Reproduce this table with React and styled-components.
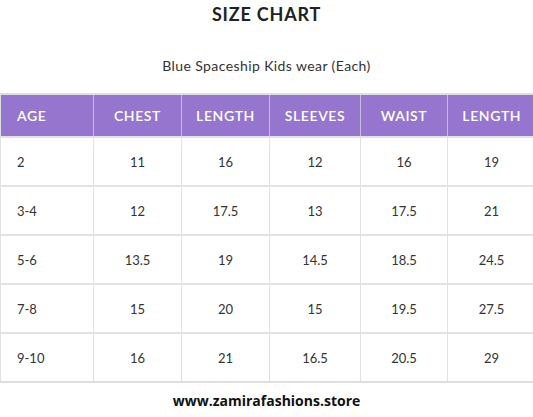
import React from "react";
import styled, { createGlobalStyle } from "styled-components";

const GlobalStyle = createGlobalStyle`
    html, body {
        margin: 0;
        padding: 0;
        background: #fff;
        overflow: hidden;
    }
`;

const Page = styled.div`
    width: 533px;
    height: 417px;
    overflow: hidden;
    font-family: "Lato", "Liberation Sans", sans-serif;
    color: #333;
`;

const Title = styled.h2`
    margin: 0;
    height: 28px;
    line-height: 28px;
    text-align: center;
    font-size: 18px;
    font-weight: 700;
    letter-spacing: 0.8px;
    color: #222;
`;

const Subtitle = styled.p`
    margin: 28px 0 0;
    line-height: 20px;
    text-align: center;
    font-size: 14px;
    letter-spacing: 0.4px;
    color: #333;
`;

const Table = styled.table`
    margin-top: 17px;
    width: 535px;
    border-collapse: collapse;
    table-layout: fixed;
    border-top: 2px solid #dedede;
    border-bottom: 2px solid #dedede;
`;

const HeadCell = styled.th`
    height: 41px;
    padding: 0;
    background: #9575cd;
    color: #fff;
    font-size: 14px;
    font-weight: 600;
    letter-spacing: 0.6px;
    text-align: ${p => (p.$left ? "left" : "center")};
    padding-left: ${p => (p.$left ? "16px" : "0")};
    border-left: 1px solid #c9bce4;
    &:first-child {
        border-left: 1px solid #dedede;
    }
`;

const Cell = styled.td`
    height: 47px;
    padding: 0;
    font-size: 13px;
    color: #333;
    text-align: ${p => (p.$left ? "left" : "center")};
    padding-left: ${p => (p.$left ? "16px" : "0")};
    border: 1px solid #e2e2e2;
    border-top-width: 2px;
`;

const Footer = styled.div`
    margin-top: 8px;
    line-height: 20px;
    text-align: center;
    font-family: "Open Sans", "Liberation Sans", sans-serif;
    font-size: 14px;
    font-weight: 700;
    color: #111;
`;

const widths = [93, 88, 88, 91, 87, 88];
const headers = ["AGE", "CHEST", "LENGTH", "SLEEVES", "WAIST", "LENGTH"];
const rows = [
    ["2", "11", "16", "12", "16", "19"],
    ["3-4", "12", "17.5", "13", "17.5", "21"],
    ["5-6", "13.5", "19", "14.5", "18.5", "24.5"],
    ["7-8", "15", "20", "15", "19.5", "27.5"],
    ["9-10", "16", "21", "16.5", "20.5", "29"],
];

const App = () => {
    return (
        <Page>
            <GlobalStyle />
            <Title>SIZE CHART</Title>
            <Subtitle>Blue Spaceship Kids wear (Each)</Subtitle>
            <Table>
                <colgroup>
                    {widths.map((w, i) => (
                        <col key={i} style={{ width: w }} />
                    ))}
                </colgroup>
                <thead>
                    <tr>
                        {headers.map((h, i) => (
                            <HeadCell key={i} $left={i === 0}>
                                {h}
                            </HeadCell>
                        ))}
                    </tr>
                </thead>
                <tbody>
                    {rows.map((row, r) => (
                        <tr key={r}>
                            {row.map((v, i) => (
                                <Cell key={i} $left={i === 0}>
                                    {v}
                                </Cell>
                            ))}
                        </tr>
                    ))}
                </tbody>
            </Table>
            <Footer>www.zamirafashions.store</Footer>
        </Page>
    );
};

export default App;
